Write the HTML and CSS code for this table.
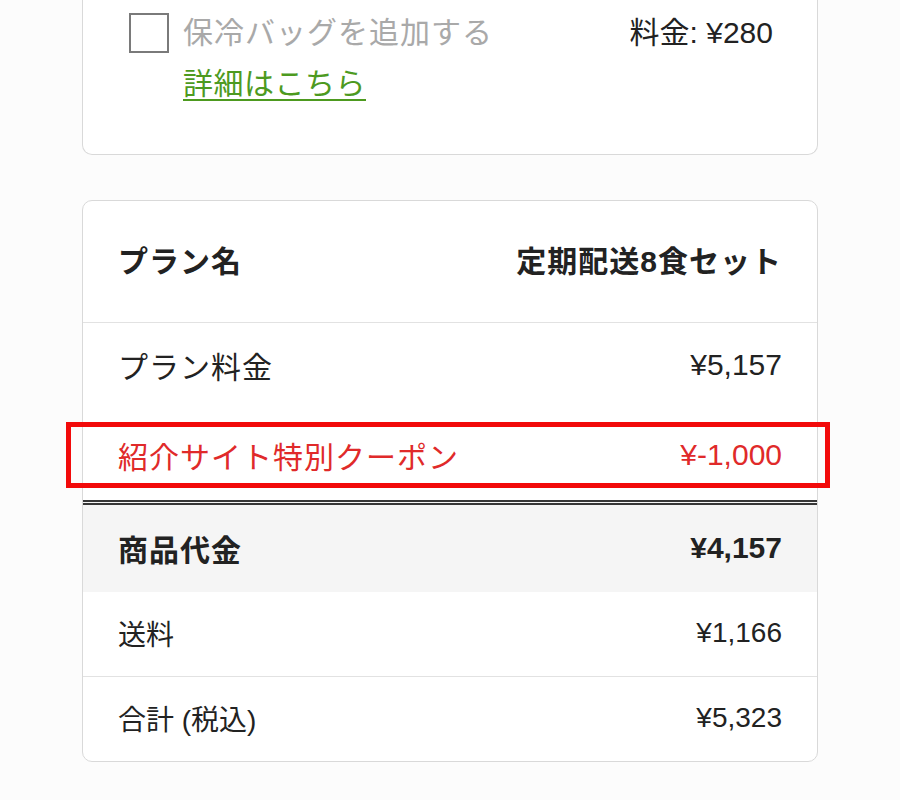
FILE: index.html
```html
<!DOCTYPE html>
<html lang="ja">
<head>
<meta charset="utf-8">
<title>ご注文内容</title>
<link rel="stylesheet" href="styles.css">
</head>
<body>
<div class="page">
  <section class="card option-card">
    <div class="option-row">
      <span class="checkbox"></span>
      <div class="option-text">
        <div class="option-label">保冷バッグを追加する</div>
        <a class="option-link" href="#">詳細はこちら</a>
      </div>
      <div class="option-price">料金: ¥280</div>
    </div>
  </section>

  <section class="card summary-card">
    <div class="row row-head">
      <span class="label">プラン名</span>
      <span class="label">定期配送8食セット</span>
    </div>
    <div class="row row-plain">
      <span class="label">プラン料金</span>
      <span>¥5,157</span>
    </div>
    <div class="row row-coupon">
      <span class="label">紹介サイト特別クーポン</span>
      <span>¥-1,000</span>
    </div>
    <div class="row row-subtotal">
      <span class="label">商品代金</span>
      <span>¥4,157</span>
    </div>
    <div class="row row-small row-divided">
      <span>送料</span>
      <span>¥1,166</span>
    </div>
    <div class="row row-small">
      <span>合計 (税込)</span>
      <span>¥5,323</span>
    </div>
  </section>
</div>
</body>
</html>
```

FILE: styles.css
```css
html, body {
  margin: 0;
  padding: 0;
  background: #fcfcfc;
}

body {
  font-family: "Liberation Sans", "Noto Sans CJK JP", sans-serif;
  color: #222;
  font-size: 30px;
}

.page {
  width: 736px;
  margin-left: 82px;
  display: flex;
  flex-direction: column;
}

.card {
  background: #fff;
  border: 1px solid #d9d9d9;
  border-radius: 10px;
}

.option-card {
  border-top: 0;
  border-radius: 0 0 10px 10px;
  padding: 13px 44px 50px 46px;
}

.option-row {
  display: flex;
  align-items: flex-start;
}

.checkbox {
  width: 36px;
  height: 36px;
  border: 2px solid #7a7a7a;
  background: #fff;
  flex: none;
}

.option-text {
  flex: 1;
  display: flex;
  flex-direction: column;
  align-items: flex-start;
  margin-left: 14px;
}

.option-label {
  line-height: 40px;
  color: #a9a9a9;
  letter-spacing: 1px;
}

.option-link {
  margin-top: 11px;
  line-height: 40px;
  color: #4d9a1f;
  letter-spacing: 0.5px;
  text-decoration: underline;
  text-decoration-thickness: 2px;
  text-underline-offset: 5px;
}

.option-price {
  line-height: 40px;
  color: #222;
}

.summary-card {
  margin-top: 45px;
  display: flex;
  flex-direction: column;
}

.row {
  display: flex;
  justify-content: space-between;
  align-items: center;
  padding: 0 35px 0 35px;
  height: 88px;
}

.label {
  letter-spacing: 1px;
}

.row-head {
  height: 115px;
  padding-bottom: 6px;
  border-bottom: 1px solid #e2e2e2;
  font-weight: bold;
}

.row-plain {
  height: 84px;
  padding-bottom: 4px;
}

.row-coupon {
  position: relative;
  height: 87px;
  padding-bottom: 2px;
  color: #e02a2a;
}

.row-coupon::after {
  content: "";
  position: absolute;
  top: 11px;
  bottom: 12px;
  left: -17px;
  right: -13px;
  border: 5px solid #f20a0a;
  pointer-events: none;
}

.row-subtotal {
  height: 86px;
  padding-bottom: 1px;
  border-top: 5px double #363636;
  background: #f5f5f5;
  font-weight: bold;
}

.row-small {
  height: 82px;
  padding-bottom: 2px;
  font-size: 28px;
}

.row-divided {
  border-bottom: 1px solid #e2e2e2;
}
```
